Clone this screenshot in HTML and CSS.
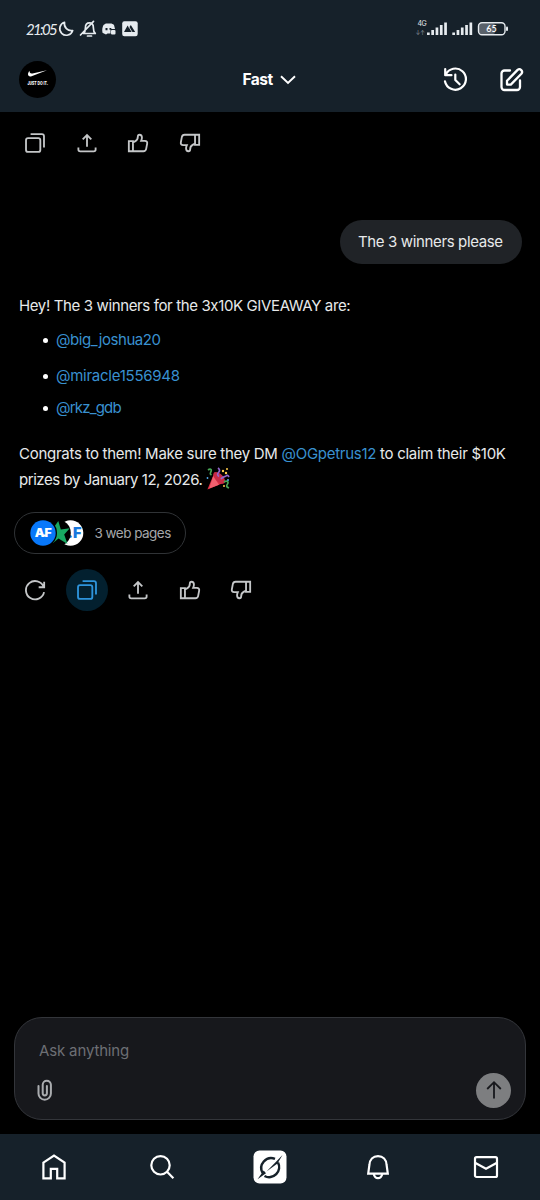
FILE: index.html
```html
<!DOCTYPE html>
<html lang="en">
<head>
<meta charset="utf-8">
<meta name="viewport" content="width=device-width, initial-scale=1">
<title>Grok chat</title>
<link rel="stylesheet" href="styles.css">
</head>
<body>
<svg class="defs" width="0" height="0">
  <symbol id="copy" viewBox="0 0 24 24"><rect x="2.200" y="6.700" width="15.600" height="15" rx="2.200"/><path d="M7.200 2.300H19.500a2.300 2.300 0 0 1 2.300 2.300V17"/></symbol>
  <symbol id="share" viewBox="0 0 24 24"><path d="M12 16V3.400M7.300 8 12 3.300 16.700 8M2.600 17v2.200a2 2 0 0 0 2 2h14.800a2 2 0 0 0 2-2V17"/></symbol>
  <symbol id="like" viewBox="0 0 24 24"><path d="M2 10h4.500v11H2zM6.500 11.500 9.200 10c1.800-1 2.600-2.600 2.600-4.800C11.800 3.700 12.500 3 13.700 3c1.700 0 2.600 1.500 2.600 3.300 0 1.200-.4 2.300-.9 3.400h4.200c1.800 0 2.700 1.300 2.400 2.900l-1.100 5.800c-.3 1.600-1.300 2.600-3 2.600H6.500"/></symbol>
  <symbol id="dislike" viewBox="0 0 24 24"><path d="M22 14h-4.500V3H22zM17.500 12.500 14.800 14c-1.800 1-2.600 2.600-2.600 4.800 0 1.500-.7 2.200-1.900 2.200-1.700 0-2.600-1.500-2.600-3.300 0-1.200.4-2.300.9-3.400H4.400c-1.800 0-2.700-1.300-2.400-2.900l1.100-5.800C3.400 4 4.400 3 6.100 3h11.400"/></symbol>
</svg>
<div class="screen">
  <header class="header">
    <div class="status">
      <span class="clock">21:05</span>
      <svg class="status-left" viewBox="0 0 82 20" width="82" height="20">
        <g fill="none" stroke="#e6ebef" stroke-width="1.700" stroke-linecap="round" stroke-linejoin="round">
          <path d="M6.500 3.300A6.600 6.600 0 1 0 14.700 11.500 7 7 0 0 1 6.500 3.300Z"/>
          <path d="M25.500 14.500h11.800c-1.500-1.300-1.900-2.700-1.900-5.600 0-3-1.300-5-3.900-5s-4.100 2-4.100 5c0 2.900-.4 4.300-1.900 5.600ZM22.500 16 35.500 2.300"/><path d="M29.500 17h4"/>
        </g>
        <path fill="#e6ebef" d="M45.500 6c1.300-1.300 2.500-1.800 4-1.500h2.500c1.500-.2 2.700.3 4 1.500l1 4h-4.500v4.500h-3L48 15.500l-3.500-1.700c-.6-3.300-.1-5.500 1-7.800Z"/>
        <rect x="53" y="11" width="4.500" height="4.500" rx="1" fill="#e6ebef"/>
        <path fill="#16212a" d="M47.500 9h2v2.200h-2zM51.500 9h1.800v1.700h-1.800z"/>
        <rect x="64.200" y="2.200" width="15.500" height="15" rx="2.200" fill="#e6ebef"/>
        <path fill="#16212a" d="m66 13 3.600-6.400L71 8.800 72.800 6l4.400 7Z"/><path d="m71 8 3 5" stroke="#e6ebef" stroke-width=".8"/>
      </svg>
      <div class="network"><span class="gen">4G</span><span class="arrows">↓↑</span></div>
      <svg class="status-right" viewBox="0 0 83 20" width="83" height="20">
        <g fill="#e6ebef">
          <rect x="1" y="13.500" width="2.700" height="2.500"/><rect x="5.300" y="11" width="2.700" height="5"/><rect x="9.600" y="8.500" width="2.700" height="7.500"/><rect x="13.900" y="6" width="2.700" height="10"/><rect x="18.200" y="3.500" width="2.700" height="12.500"/>
          <rect x="26.300" y="13.500" width="2.700" height="2.500"/><rect x="30.600" y="11" width="2.700" height="5"/><rect x="34.900" y="8.500" width="2.700" height="7.500"/><rect x="39.200" y="6" width="2.700" height="10"/><rect x="43.500" y="3.500" width="2.700" height="12.500"/>
          <rect x="80" y="7.500" width="2" height="4.500" rx="1"/>
        </g>
        <rect x="53" y="4.500" width="16" height="10.500" rx="2" fill="#59616a"/>
        <rect x="52.500" y="3.800" width="26.500" height="12" rx="3.500" fill="none" stroke="#e6ebef" stroke-width="1.400"/>
        <text x="65.500" y="13.300" text-anchor="middle" class="battery">65</text>
      </svg>
    </div>
    <div class="topbar">
      <svg class="avatar" viewBox="0 0 37 37" width="37" height="37">
        <circle cx="18.500" cy="18.500" r="18.500" fill="#000"/>
        <path fill="#fff" d="M10.500 9.800c-2.400 2.800-2 6.500 2.100 5.400L28 9.300l-14.500 3.200c-2 .4-3.100-.6-3-2.700Z"/>
        <text transform="translate(18.700 24) scale(.7 1)" text-anchor="middle" class="slogan">JUST DO IT.</text>
      </svg>
      <div class="model"><span>Fast</span><svg viewBox="0 0 16 10" width="16" height="10"><path d="m1 1.200 7 6.800 7-6.800" fill="none" stroke="#fff" stroke-width="1.900"/></svg></div>
      <div class="tools">
        <svg class="line" viewBox="0 0 26 26" width="25" height="25" stroke-width="2.300"><path d="M2.300 2.200v6.300h6.500M2.800 8.100A11 11 0 1 1 2.100 15"/><path d="M12.800 7.800v5.800l4.500 4.400"/></svg>
        <svg class="line" viewBox="0 0 26 26" width="26" height="26" stroke-width="2.300"><path d="M12 3.500H6.500a3 3 0 0 0-3 3V20a3 3 0 0 0 3 3H19a3 3 0 0 0 3-3v-6.500"/><path d="m9 13.800 10.600-10.900a2.700 2.700 0 0 1 3.800 3.800L12.800 17.600H9Z"/></svg>
      </div>
    </div>
  </header>

  <main class="chat">
    <div class="actions">
      <button aria-label="Copy"><svg><use href="#copy"/></svg></button>
      <button aria-label="Share"><svg><use href="#share"/></svg></button>
      <button aria-label="Like"><svg><use href="#like"/></svg></button>
      <button aria-label="Dislike"><svg><use href="#dislike"/></svg></button>
    </div>
    <div class="bubble">The 3 winners please</div>
    <div class="answer">
      <p class="intro">Hey! The 3 winners for the 3x10K GIVEAWAY are:</p>
      <ul>
        <li><a class="n1">@big_joshua20</a></li>
        <li><a class="n2">@miracle1556948</a></li>
        <li><a class="n3">@rkz_gdb</a></li>
      </ul>
      <p class="outro"><span class="l1">Congrats to them! Make sure they DM <a>@OGpetrus12</a> to claim their $10K</span><br><span class="l2">prizes by January 12, 2026.</span><svg class="party" viewBox="0 0 24 24" width="24" height="24">
          <path fill="#dd2e44" d="M8.500 5.500 1.400 22.500 18.500 15.500Z"/>
          <path fill="#f2606f" d="M7.200 9 3.200 21.500 13 17.800Z"/>
          <ellipse cx="13.200" cy="10.800" rx="7.400" ry="3.800" transform="rotate(45 13.200 10.800)" fill="#c72b45"/>
          <path fill="none" stroke="#48a657" stroke-width="1.700" d="M2 3c2-1.500 4-1 3 1.500S4 7 5.500 8M18 15c3-2 5 0 3.500 2s-1 3 1.500 4"/>
          <path fill="none" stroke="#9266cc" stroke-width="1.700" d="M12 1c2 1.500 2 3 .5 4.500s-1 3 .5 4M15 12c2-3 4-2 5-3s2-1 3 1"/>
          <g fill="#ffcc4d"><circle cx="17" cy="4" r="1.200"/><circle cx="21" cy="2" r="1"/><circle cx="20" cy="6" r="1.200"/><circle cx="18" cy="19" r="1"/></g>
          <g fill="#55acee"><circle cx="1.500" cy="11" r=".9"/><circle cx="22" cy="13" r="1"/></g>
        </svg></p>
    </div>
    <div class="sources">
      <svg viewBox="0 0 54 26" width="54" height="26">
        <circle cx="40.500" cy="13" r="12.800" fill="#fff"/>
        <text x="37.500" y="18" class="mark blue">.F</text>
        <circle cx="27.500" cy="13" r="13.300" fill="#000"/>
        <path d="m28.300 1 2.500 8.500 9-1.200-5.600 6.300 3.300 9.300-9-5.500-5.800 4.800V9Z" fill="#18a862"/>
        <circle cx="13" cy="13" r="14" fill="#000"/>
        <circle cx="13" cy="13" r="12.700" fill="#0878fa"/>
        <text transform="translate(13.300 17.200) scale(1.070 1)" text-anchor="middle" class="mark">AF</text><rect x="12.800" y="14.500" width="3" height="2" fill="#fff"/>
      </svg>
      <span>3 web pages</span>
    </div>
    <div class="actions reply-actions">
      <button aria-label="Regenerate"><svg viewBox="0 0 24 24"><path d="M22 3v6h-6M21.500 8.700a10 10 0 1 0 .4 5.600"/></svg></button>
      <button class="active" aria-label="Copy"><svg><use href="#copy"/></svg></button>
      <button aria-label="Share"><svg><use href="#share"/></svg></button>
      <button aria-label="Like"><svg><use href="#like"/></svg></button>
      <button aria-label="Dislike"><svg><use href="#dislike"/></svg></button>
    </div>
  </main>

  <section class="composer">
    <div class="placeholder">Ask anything</div>
    <div class="composer-row">
      <svg class="clip" viewBox="0 0 16 22" width="16" height="22"><path d="M1.500 7v7.500a6.200 6.200 0 0 0 12.400 0V5.800a4.100 4.100 0 0 0-8.200 0v8.500a2.100 2.100 0 0 0 4.200 0V7"/></svg>
      <button class="send" aria-label="Send"><svg viewBox="0 0 20 20" width="20" height="20"><path d="M10 18.500V2.300M3.200 9 10 2.200 16.800 9"/></svg></button>
    </div>
  </section>

  <nav class="nav">
    <a><svg class="line sharp" viewBox="0 0 26 26" width="26" height="26" stroke-width="2.200"><path d="M2.400 8.600 13 1.600l10.600 7V24.300h-7.400v-9.500H9.800v9.500H2.400Z"/></svg></a>
    <a><svg class="line sharp" viewBox="0 0 26 26" width="26" height="26" stroke-width="2.200"><circle cx="11.500" cy="11.300" r="9.200"/><path d="m18 17.800 6.400 6.400"/></svg></a>
    <a><svg viewBox="0 0 34 34" width="34" height="34"><rect x=".5" y=".5" width="33" height="33" rx="6" fill="#fff"/><g fill="none" stroke="#16212a" stroke-width="2.500"><path d="M9.600 23A10 10 0 0 1 22 8.800M25 12.500A10 10 0 0 1 11.500 26"/></g><path fill="#16212a" d="m13.500 21.500 9.300-9.500L29.500 5l-5 8.400ZM4.500 29.300l6.200-8.800 2.300 2.800Z"/></svg></a>
    <a><svg class="line sharp" viewBox="0 0 26 26" width="26" height="26" stroke-width="2.200"><path d="M4.400 11C4.700 5.500 8 2.200 13 2.200s8.300 3.300 8.600 8.800l1.200 8.600H3.200ZM8.700 20c.7 2.800 2 4.200 4.300 4.200s3.600-1.400 4.300-4.200"/></svg></a>
    <a><svg class="line sharp" viewBox="0 0 26 26" width="26" height="26" stroke-width="2.200"><rect x="2" y="3.200" width="22" height="19.800" rx="1.500"/><path d="m2 8.700 11 6 11-6"/></svg></a>
  </nav>
</div>
</body>
</html>
```
FILE: styles.css
```css
* { box-sizing: border-box; }
body { margin: 0; background: #000; color: #e7e9ea; font-family: Inter, Roboto, sans-serif; font-feature-settings: "calt" 0; }
button { border: 0; padding: 0; background: none; color: inherit; font: inherit; }
p, ul { margin: 0; padding: 0; }
.defs { display: block; position: absolute; }
.screen { display: flex; flex-direction: column; width: 540px; height: 1200px; overflow: hidden; }
.header { height: 112px; background: #16212a; padding: 19px 16px 0 19px; }
.status { display: flex; height: 20px; align-items: flex-start; padding-left: 7px; }
.clock { width: 32px; font: italic 15px/21px Lato, sans-serif; letter-spacing: -1.7px; color: #e6ebef; }
.status-left { margin-right: auto; }
.network { display: flex; flex-direction: column; width: 8px; margin-right: 1px; font-size: 7px; line-height: 9px; letter-spacing: -.5px; align-items: flex-end; }
.gen { width: 7px; }
.arrows { color: #8b949c; font-size: 6px; }
.status-right { margin-right: 15.5px; }
.battery { font: 600 9px Lato, sans-serif; fill: #fff; }
.topbar { display: grid; grid-template-columns: 1fr auto 1fr; align-items: center; height: 41px; margin-top: 20px; }
.avatar { overflow: visible; }
.slogan { font: 800 5px Inter, sans-serif; fill: #fff; }
.model { display: flex; align-items: center; gap: 7px; margin-right: 5px; font: 700 15.5px/24px Inter, sans-serif; letter-spacing: -.5px; color: #fff; }
.tools { display: flex; justify-content: flex-end; align-items: center; gap: 30.5px; }
.line { fill: none; stroke: #fff; stroke-linecap: round; stroke-linejoin: round; }
.sharp { stroke-linecap: butt; stroke-linejoin: miter; }
.chat { flex: 1; padding: 10px 14px 0; }
.actions { display: flex; gap: 9.5px; }
.actions button { display: grid; place-items: center; width: 42px; height: 42px; border-radius: 50%; }
.actions svg { width: 22px; height: 22px; fill: none; stroke: #c4c6c8; stroke-width: 2; }
.actions .active { background: #03202f; }
.actions .active svg { stroke: #2e94dc; }
.bubble { width: 182px; height: 44px; margin: 56px 4px 0 auto; border-radius: 22px; background: #202327; padding-left: 18px; font-size: 15px; letter-spacing: -.36px; line-height: 43px; white-space: nowrap; }
.answer { margin-top: 28px; padding-left: 5px; font-size: 15px; line-height: 26px; white-space: nowrap; }
.intro { padding-top: 1px; letter-spacing: -.37px; }
.answer ul { list-style: none; padding-left: 37px; margin: 8px 0 20px; }
.answer li { display: flex; align-items: center; height: 26px; margin-bottom: 10px; }
.answer li:nth-child(2) { margin-bottom: 6px; }
.answer li:last-child { margin-bottom: 0; }
.answer li::before { content: ""; width: 5px; height: 5px; margin: 0 8px 0 -13px; flex: none; border-radius: 50%; background: #fff; }
.answer a { color: #3991d0; }
.n1 { letter-spacing: -.42px; }
.n2 { letter-spacing: -.26px; }
.n3 { letter-spacing: -.8px; }
.l1 { letter-spacing: -.28px; }
.l2 { letter-spacing: -.45px; }
.party { vertical-align: -6px; margin-left: 4px; }
.outro { height: 52px; }
.sources { display: flex; align-items: center; width: 172px; height: 42px; margin-top: 19px; border: 1px solid #303336; border-radius: 21px; padding-left: 15px; gap: 10.5px; color: #a5a7aa; font-size: 13.5px; letter-spacing: -.53px; white-space: nowrap; }
.mark { font: 900 11.5px Inter, sans-serif; letter-spacing: 0; fill: #fff; }
.blue { font-size: 14.5px; fill: #1878dc; }
.reply-actions { margin-top: 15px; }
.composer { height: 103px; margin: 0 14px 14px; border: 1px solid #33353a; border-radius: 28px; background: #17181c; padding: 20px 14px 0 22px; }
.placeholder { padding-left: 2px; font-size: 15px; letter-spacing: -.15px; line-height: 26px; color: #6d6f74; }
.composer-row { display: flex; justify-content: space-between; align-items: center; height: 36px; margin-top: 8px; }
.clip { fill: none; stroke: #aaacaf; stroke-width: 2; stroke-linecap: round; }
.send { display: grid; place-items: center; width: 35px; height: 35px; border-radius: 50%; background: #7d7e80; }
.send svg { fill: none; stroke: #17181c; stroke-width: 1.8; }
.nav { display: grid; grid-template-columns: repeat(5, 1fr); height: 66px; background: #16212a; }
.nav a { display: grid; place-items: center; }
```
